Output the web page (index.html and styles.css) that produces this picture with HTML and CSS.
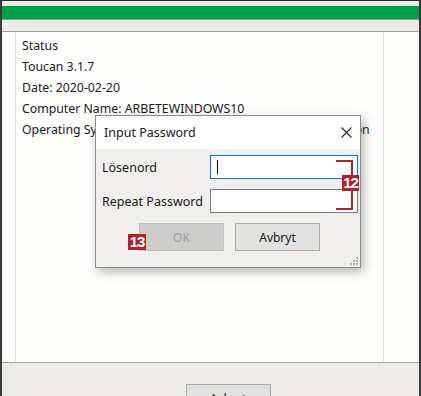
FILE: index.html
```html
<!DOCTYPE html>
<html lang="sv">

<head>
  <meta charset="UTF-8">
  <meta name="viewport" content="width=device-width, initial-scale=1.0">
  <title>Toucan</title>
  <link rel="stylesheet" href="styles.css">
</head>

<body>
  <div class="window">
    <!-- Top strip with progress bar -->
    <div class="topbar">
      <div class="progress"></div>
    </div>

    <!-- Status text -->
    <div class="main">
      <div class="panel">
        <p>Status</p>
        <p>Toucan 3.1.7</p>
        <p>Date: 2020-02-20</p>
        <p>Computer Name: ARBETEWINDOWS10</p>
        <p>Operating System: Microsoft Windows 10 Pro (64-bit) Edition</p>
      </div>
    </div>

    <div class="footer">
      <button class="btn footer-btn">Avbryt</button>
    </div>

    <!-- Password dialog -->
    <div class="dialog">
      <div class="dialog-title">
        <span>Input Password</span>
        <svg class="close" width="11" height="11" viewBox="0 0 11 11">
          <path d="M0.5 0.5 L10.5 10.5 M10.5 0.5 L0.5 10.5" stroke="#222" stroke-width="1.1" fill="none" />
        </svg>
      </div>
      <div class="dialog-body">
        <div class="field">
          <label>Lösenord</label>
          <div class="input active"><span class="caret"></span></div>
        </div>
        <div class="field">
          <label>Repeat Password</label>
          <div class="input"></div>
        </div>
        <div class="buttons">
          <button class="btn disabled">OK</button>
          <button class="btn">Avbryt</button>
        </div>
        <svg class="grip" width="8" height="8" viewBox="0 0 8 8">
          <rect x="6" y="0" width="2" height="2" fill="#b0b0b0" />
          <rect x="6" y="3" width="2" height="2" fill="#b0b0b0" />
          <rect x="3" y="3" width="2" height="2" fill="#b0b0b0" />
          <rect x="6" y="6" width="2" height="2" fill="#b0b0b0" />
          <rect x="3" y="6" width="2" height="2" fill="#b0b0b0" />
          <rect x="0" y="6" width="2" height="2" fill="#b0b0b0" />
        </svg>
      </div>
    </div>

    <!-- Annotations -->
    <div class="bracket"></div>
    <div class="tag tag-12">12</div>
    <div class="tag tag-13">13</div>
  </div>
</body>

</html>
```

FILE: styles.css
```css
/* Reset */
* {
  margin: 0;
  padding: 0;
  box-sizing: border-box;
}

body {
  font-family: 'Noto Sans', 'Open Sans', sans-serif;
  font-size: 12px;
  color: #1a1a1a;
  background: #fff;
}

/* Outer window */
.window {
  position: relative;
  width: 421px;
  height: 396px;
  display: flex;
  flex-direction: column;
  background-color: #ecebe7;
  border-top: 1px solid #2a2a2a;
  border-left: 2px solid #3a3a3a;
  border-right: 2px solid #3a3a3a;
  overflow: hidden;
}

/* Top strip */
.topbar {
  height: 31px;
  padding-top: 5px;
  border-bottom: 1px solid #a3a3a3;
}

.progress {
  height: 14px;
  background-color: #00a04b;
  border-bottom: 1px solid #5cbf84;
}

/* Main text area */
.main {
  flex: 1;
  background-color: #fefefc;
}

.panel {
  height: 100%;
  margin-left: 13px;
  width: 369px;
  border-left: 1px solid #e4e4e2;
  border-right: 1px solid #e4e4e2;
  padding: 3px 0 0 6px;
  white-space: nowrap;
  overflow: hidden;
}

.panel p {
  line-height: 21px;
  font-size: 12.3px;
}

/* Bottom strip */
.footer {
  height: 34px;
  border-top: 1px solid #a3a3a3;
  display: flex;
  justify-content: center;
  padding-top: 21px;
  padding-left: 35px;
}

.btn {
  font-family: inherit;
  font-size: 12px;
  width: 85px;
  height: 28px;
  background-color: #e1e1df;
  border: 1px solid #adadad;
  color: #1a1a1a;
  flex-shrink: 0;
}

/* Dialog */
.dialog {
  position: absolute;
  left: 93px;
  top: 114px;
  width: 266px;
  height: 153px;
  display: flex;
  flex-direction: column;
  border: 1px solid #8c8c8c;
  background-color: #f0efeb;
  box-shadow: 3px 4px 10px rgba(0, 0, 0, 0.28);
}

.dialog-title {
  height: 33px;
  background-color: #fff;
  display: flex;
  align-items: center;
  justify-content: space-between;
  padding: 0 8px 0 8px;
  font-size: 12.5px;
}

.dialog-body {
  position: relative;
  flex: 1;
  padding: 6px 2px 0 6px;
}

.field {
  display: flex;
  align-items: center;
  justify-content: space-between;
  height: 24px;
  margin-bottom: 10px;
}

.field label {
  font-size: 12.5px;
}

.input {
  width: 148px;
  height: 24px;
  background-color: #fff;
  border: 1px solid #7a7a7a;
  padding: 4px 6px;
}

.input.active {
  border-color: #0078d7;
}

.caret {
  display: block;
  width: 1px;
  height: 14px;
  background-color: #000;
}

.buttons {
  display: flex;
  gap: 11px;
  margin-top: 6px;
  padding-left: 37px;
}

.btn.disabled {
  background-color: #cccccb;
  border-color: #bfbfbf;
  color: #a0a0a0;
}

.grip {
  position: absolute;
  right: 2px;
  bottom: 2px;
}

/* Red annotation marks */
.bracket {
  position: absolute;
  left: 334px;
  top: 159px;
  width: 17px;
  height: 50px;
  border: 2px solid #b3202b;
  border-left: none;
}

.tag {
  position: absolute;
  background-color: #b3202b;
  color: #fff;
  font-family: 'Liberation Sans', sans-serif;
  font-weight: bold;
  font-size: 15px;
  line-height: 16px;
  text-align: center;
  letter-spacing: -1px;
}

.tag-12 {
  left: 340px;
  top: 174px;
  width: 17px;
  height: 16px;
}

.tag-13 {
  left: 126px;
  top: 233px;
  width: 18px;
  height: 16px;
}
```
